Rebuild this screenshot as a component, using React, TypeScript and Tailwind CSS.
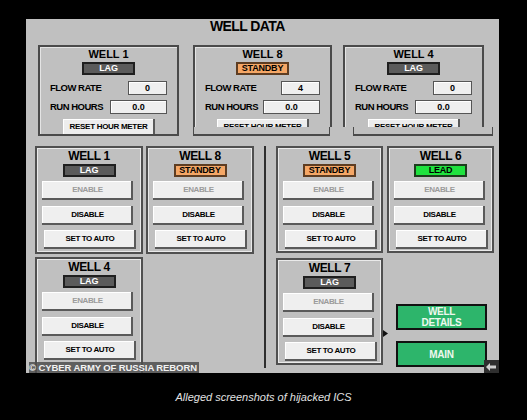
type Tone = "lag" | "standby" | "lead";

const toneClass: Record<Tone, string> = {
  lag: "bg-[#5b5b5b] border-[#1f1f1f] text-white",
  standby: "bg-[#f5a766] border-[#5e3d22] text-black",
  lead: "bg-[#1fe23e] border-[#1d3d1d] text-black",
};

const toneLabel: Record<Tone, string> = {
  lag: "LAG",
  standby: "STANDBY",
  lead: "LEAD",
};

function Badge({ tone }: { tone: Tone }) {
  return (
    <div
      className={`flex h-[13px] w-[53px] items-center justify-center border-2 text-[9px] font-bold leading-[9px] tracking-[-0.2px] ${toneClass[tone]}`}
    >
      {toneLabel[tone]}
    </div>
  );
}

function ValueBox({ w, children }: { w: string; children: string }) {
  return (
    <div
      className={`flex h-[14px] items-center justify-center border border-[#555] bg-[#efefef] text-[9px] font-bold leading-[9px] shadow-[inset_1px_1px_0_#ffffff] ${w}`}
    >
      {children}
    </div>
  );
}

function Btn({ className, children }: { className: string; children: string }) {
  return (
    <div
      className={`flex h-[19px] shrink-0 items-center justify-center bg-[#efefef] pb-[1px] text-[8px] font-bold leading-[8px] tracking-[-0.4px] shadow-[inset_-2px_-2px_0_#5a5a5a,inset_1px_1px_0_#ffffff] ${className}`}
    >
      {children}
    </div>
  );
}

type TopCardProps = {
  name: string;
  tone: Tone;
  flow: string;
  width: string;
  frame: string;
  bracket?: string;
};

function TopCard({ name, tone, flow, width, frame, bracket }: TopCardProps) {
  return (
    <div className={`flex shrink-0 flex-col ${width}`}>
      <div
        className={`flex flex-col items-center overflow-hidden border-[#4a4a4a] shadow-[inset_1px_1px_0_#e4e4e4] ${frame}`}
      >
        <div className="mt-[1px] text-[11px] font-bold leading-[13px]">{name}</div>
        <div className="mt-[1px]">
          <Badge tone={tone} />
        </div>
        <div className="mt-[6px] flex w-full items-center justify-between px-[10px]">
          <span className="text-[9.5px] font-bold leading-[10px] tracking-[-0.5px]">FLOW RATE</span>
          <ValueBox w="w-[39px]">{flow}</ValueBox>
        </div>
        <div className="mt-[5px] flex w-full items-center justify-between px-[10px]">
          <span className="text-[9.5px] font-bold leading-[10px] tracking-[-0.5px]">RUN HOURS</span>
          <ValueBox w="w-[57px]">0.0</ValueBox>
        </div>
        <div className="mt-[5px] flex h-[16px] w-[92px] shrink-0 items-center justify-center bg-[#ededed] pb-[1px] text-[8px] font-bold leading-[8px] tracking-[-0.3px] shadow-[inset_-2px_0_0_#5a5a5a,inset_1px_1px_0_#ffffff]">
          RESET HOUR METER
        </div>
      </div>
      {bracket && <div className={`h-[9px] border-x border-b-2 border-[#4a4a4a] ${bracket}`} />}
    </div>
  );
}

type ControlCardProps = {
  name: string;
  tone: Tone;
  size: string;
};

function ControlCard({ name, tone, size }: ControlCardProps) {
  return (
    <div
      className={`flex shrink-0 flex-col items-center border-2 border-[#505050] shadow-[inset_0_0_0_1px_#eaeaea] ${size}`}
    >
      <div className="mt-[1px] text-[12px] font-bold leading-[14px] tracking-[-0.4px]">{name}</div>
      <div className="mt-[1px]">
        <Badge tone={tone} />
      </div>
      <div className="mt-[4px] flex w-full flex-col items-start">
        <Btn className="ml-[5px] w-[91px] text-[#9b9b9b]">ENABLE</Btn>
        <Btn className="ml-[5px] mt-[6px] w-[91px] text-black">DISABLE</Btn>
        <Btn className="ml-[7px] mt-[5px] w-[92px] text-black">SET TO AUTO</Btn>
      </div>
    </div>
  );
}

function GreenBtn({ children }: { children: React.ReactNode }) {
  return (
    <div className="flex h-[26px] w-[91px] flex-col items-center justify-center border-2 border-[#111] bg-[#2db56b] text-[10px] font-bold leading-[11px] tracking-[-0.3px] text-[#eef8ee]">
      {children}
    </div>
  );
}

export default function App() {
  return (
    <div className="flex h-[420px] w-[527px] flex-col overflow-hidden bg-black font-['Liberation_Sans',Arial,sans-serif] text-black">
      <div className="relative ml-[26px] mt-[19px] flex h-[354px] w-[473px] shrink-0 flex-col overflow-hidden bg-[#c0c0c0]">
        <div className="ml-[129px] h-[2px] w-[216px] bg-[#ececec]" />
        <div className="ml-[184px] text-[14px] font-bold leading-[14px] tracking-[-0.6px]">WELL DATA</div>

        <div className="mt-[12px] flex pl-[12px]">
          <TopCard
            name="WELL 1"
            tone="lag"
            flow="0"
            width="w-[141px]"
            frame="h-[91px] border-2"
          />
          <TopCard
            name="WELL 8"
            tone="standby"
            flow="4"
            width="ml-[14px] w-[139px]"
            frame="h-[82px] border-x-2 border-t-2"
            bracket="w-[137px]"
          />
          <TopCard
            name="WELL 4"
            tone="lag"
            flow="0"
            width="ml-[11px] w-[141px]"
            frame="h-[82px] border-x-2 border-t-2"
            bracket="ml-[10px] w-[140px]"
          />
        </div>

        <div className="mt-[10px] flex pl-[9px]">
          <div className="flex flex-col">
            <div className="flex gap-[3px]">
              <ControlCard name="WELL 1" tone="lag" size="h-[108px] w-[108px]" />
              <ControlCard name="WELL 8" tone="standby" size="h-[108px] w-[108px]" />
            </div>
            <div className="mt-[3px]">
              <ControlCard name="WELL 4" tone="lag" size="h-[118px] w-[108px]" />
            </div>
          </div>

          <div className="ml-[10px] h-[222px] w-[2px] shrink-0 bg-[#2e2e2e]" />

          <div className="ml-[10px] flex flex-col">
            <div className="flex gap-[4px]">
              <ControlCard name="WELL 5" tone="standby" size="h-[107px] w-[107px]" />
              <ControlCard name="WELL 6" tone="lead" size="h-[107px] w-[107px]" />
            </div>
            <div className="mt-[5px] flex">
              <ControlCard name="WELL 7" tone="lag" size="h-[107px] w-[107px]" />
              <div className="ml-[13px] flex flex-col pt-[46px]">
                <GreenBtn>
                  <span>WELL</span>
                  <span>DETAILS</span>
                </GreenBtn>
                <div className="mt-[11px]">
                  <GreenBtn>MAIN</GreenBtn>
                </div>
              </div>
            </div>
          </div>
        </div>

        {/* watermark over the HMI */}
        <div className="absolute left-[3px] top-[343px] flex h-[11px] w-[170px] items-center overflow-hidden whitespace-nowrap bg-[#4e4e4e]/85 text-[9.5px] font-bold leading-[10px] tracking-[-0.1px] text-[#f2f2f2]">
          © CYBER ARMY OF RUSSIA REBORN
        </div>

        {/* mouse pointer */}
        <svg className="absolute left-[357px] top-[311px]" width="5" height="7" viewBox="0 0 5 7">
          <polygon points="0,0 5,3.5 0,7" fill="#111" />
        </svg>

        {/* corner back icon */}
        <div className="absolute bottom-0 right-0 flex h-[13px] w-[15px] items-center justify-center bg-[#2f2f2f]">
          <svg width="11" height="8" viewBox="0 0 11 8">
            <polygon points="0,4 4,0 4,2.5 10,2.5 10,5.5 4,5.5 4,8" fill="#cfcfcf" />
          </svg>
        </div>
      </div>

      <div className="mt-[18px] text-center text-[11px] italic leading-[13px] text-[#e2e2e2]">
        Alleged screenshots of hijacked ICS
      </div>
    </div>
  );
}
